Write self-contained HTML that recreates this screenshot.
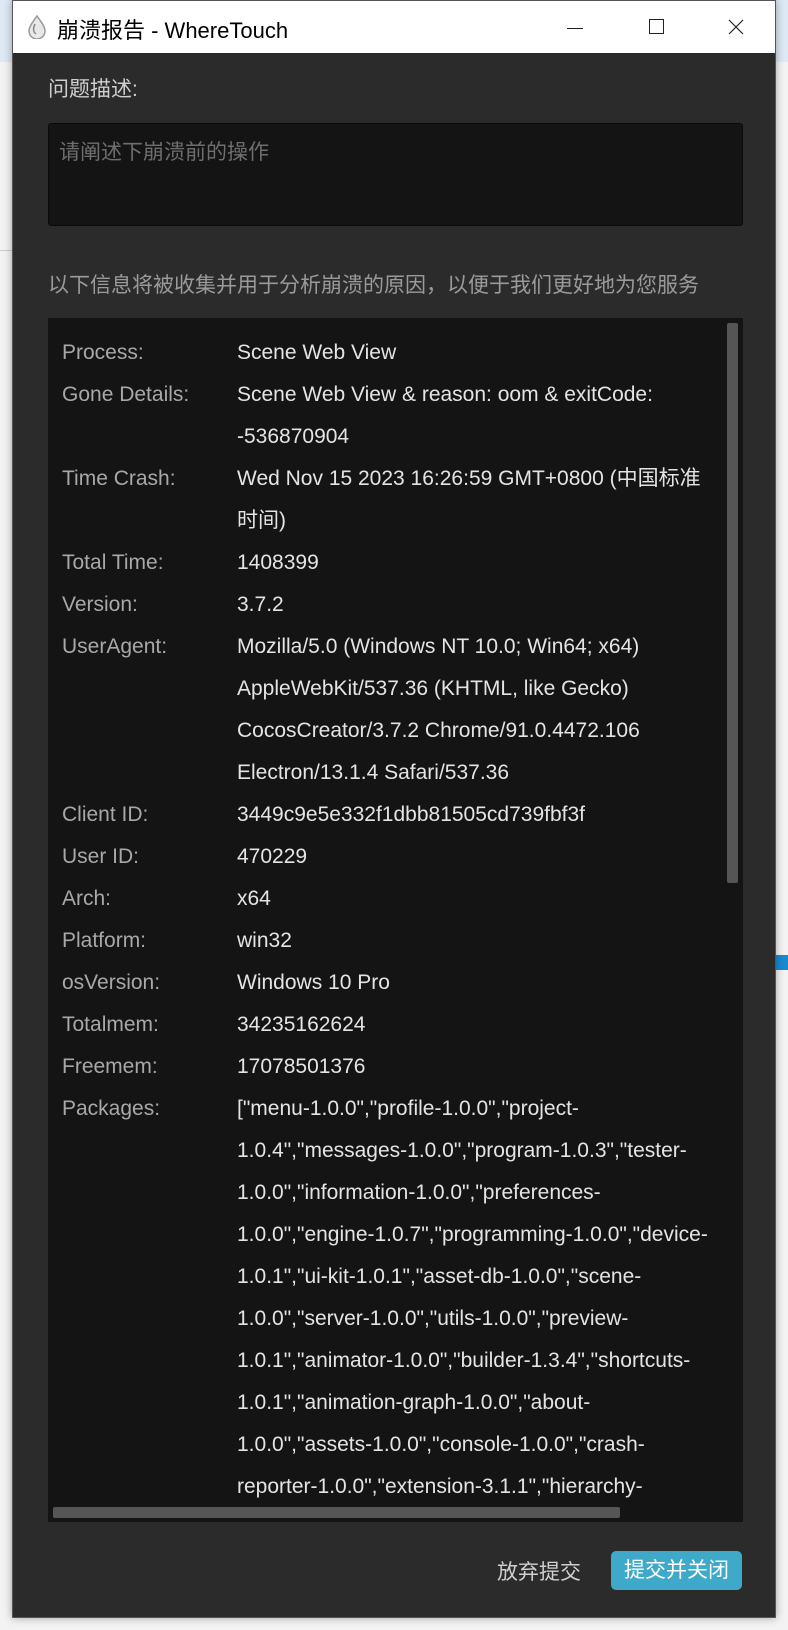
<!DOCTYPE html>
<html><head><meta charset="utf-8">
<style>
*{margin:0;padding:0;box-sizing:border-box}
body{width:788px;height:1630px;background:#f3f3f3;position:relative;overflow:hidden;font-family:"Liberation Sans","Noto Sans CJK SC",sans-serif}
.bgtop{position:absolute;left:0;top:0;width:788px;height:62px;background:#dde9f4}
.win{position:absolute;left:12px;top:0;width:764px;height:1618px;background:#2b2b2b;box-shadow:0 0 8px rgba(0,0,0,.35);border:1px solid #555}
.tb{position:absolute;left:0;top:0;width:762px;height:52px;background:#fff}
.tt{position:absolute;left:44px;top:12px;font-size:22px;color:#000}
.lab{position:absolute;color:#cfcfcf;font-size:21px}
.ta{position:absolute;left:35px;top:122px;width:695px;height:103px;background:#141414;border:1px solid #0a0a0a;border-radius:3px}
.ta span{position:absolute;left:10px;top:12px;color:#6e6e6e;font-size:21px}
.box{position:absolute;left:35px;top:317px;width:695px;height:1204px;background:#141414;overflow:hidden}
.rows{position:absolute;left:14px;top:14px;font-size:21px;line-height:42px}
.r{display:flex}
.k{width:175px;color:#a8a8a8;flex:none}
.v{color:#e4e4e4;white-space:nowrap}
.vs{position:absolute;left:679px;top:5px;width:11px;height:560px;background:#555;border-radius:2px}
.hs{position:absolute;left:5px;top:1189px;width:567px;height:11px;background:#555;border-radius:2px}
.btn2{position:absolute;left:598px;top:1550px;width:131px;height:39px;background:#3fa9c9;border-radius:5px;color:#fff;font-size:21px;text-align:center;line-height:39px}
.btn1{position:absolute;left:484px;top:1555px;color:#cfcfcf;font-size:21px}
</style></head><body>
<div class="bgtop"></div>
<div style="position:absolute;left:0;top:250px;width:12px;height:1px;background:#ccc"></div>
<div style="position:absolute;left:776px;top:955px;width:12px;height:15px;background:#1a8ad0"></div>
<div class="win">
<div class="tb">
<svg style="position:absolute;left:13px;top:14px" width="22" height="24" viewBox="0 0 22 24"><path d="M11 1 C6 8 3 12 3 16 a8 8 0 0 0 16 0 C19 12 16 8 11 1Z" fill="#e8e8e8" stroke="#999" stroke-width="1.5"/><path d="M9 9 C7 13 7 17 10 19" fill="none" stroke="#888" stroke-width="1.5"/></svg>
<div class="tt">崩溃报告 - WhereTouch</div>
<div style="position:absolute;left:554px;top:27px;width:16px;height:1px;background:#222"></div>
<div style="position:absolute;left:636px;top:18px;width:15px;height:15px;border:1.3px solid #222"></div>
<svg style="position:absolute;left:715px;top:18px" width="16" height="16"><path d="M1 1L15 15M15 1L1 15" stroke="#222" stroke-width="1.2"/></svg>
</div>
<div class="lab" style="left:35px;top:72px">问题描述:</div>
<div class="ta"><span>请阐述下崩溃前的操作</span></div>
<div class="lab" style="left:35px;top:268px;color:#9a9a9a">以下信息将被收集并用于分析崩溃的原因，以便于我们更好地为您服务</div>
<div class="box">
<div class="rows">
<div class="r"><div class="k">Process:</div><div class="v">Scene Web View</div></div>
<div class="r"><div class="k">Gone Details:</div><div class="v">Scene Web View &amp; reason: oom &amp; exitCode:<br>-536870904</div></div>
<div class="r"><div class="k">Time Crash:</div><div class="v">Wed Nov 15 2023 16:26:59 GMT+0800 (中国标准<br>时间)</div></div>
<div class="r"><div class="k">Total Time:</div><div class="v">1408399</div></div>
<div class="r"><div class="k">Version:</div><div class="v">3.7.2</div></div>
<div class="r"><div class="k">UserAgent:</div><div class="v">Mozilla/5.0 (Windows NT 10.0; Win64; x64)<br>AppleWebKit/537.36 (KHTML, like Gecko)<br>CocosCreator/3.7.2 Chrome/91.0.4472.106<br>Electron/13.1.4 Safari/537.36</div></div>
<div class="r"><div class="k">Client ID:</div><div class="v">3449c9e5e332f1dbb81505cd739fbf3f</div></div>
<div class="r"><div class="k">User ID:</div><div class="v">470229</div></div>
<div class="r"><div class="k">Arch:</div><div class="v">x64</div></div>
<div class="r"><div class="k">Platform:</div><div class="v">win32</div></div>
<div class="r"><div class="k">osVersion:</div><div class="v">Windows 10 Pro</div></div>
<div class="r"><div class="k">Totalmem:</div><div class="v">34235162624</div></div>
<div class="r"><div class="k">Freemem:</div><div class="v">17078501376</div></div>
<div class="r"><div class="k">Packages:</div><div class="v">["menu-1.0.0","profile-1.0.0","project-<br>1.0.4","messages-1.0.0","program-1.0.3","tester-<br>1.0.0","information-1.0.0","preferences-<br>1.0.0","engine-1.0.7","programming-1.0.0","device-<br>1.0.1","ui-kit-1.0.1","asset-db-1.0.0","scene-<br>1.0.0","server-1.0.0","utils-1.0.0","preview-<br>1.0.1","animator-1.0.0","builder-1.3.4","shortcuts-<br>1.0.1","animation-graph-1.0.0","about-<br>1.0.0","assets-1.0.0","console-1.0.0","crash-<br>reporter-1.0.0","extension-3.1.1","hierarchy-</div></div>
</div>
<div class="vs"></div>
<div class="hs"></div>
</div>
<div class="btn1">放弃提交</div>
<div class="btn2">提交并关闭</div>
</div>
</body></html>
